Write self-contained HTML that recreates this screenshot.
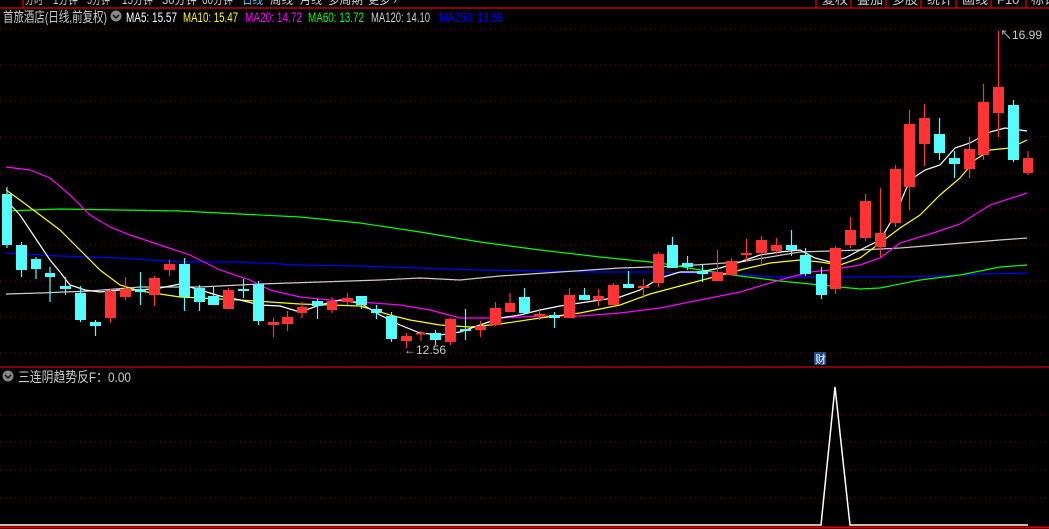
<!DOCTYPE html>
<html><head><meta charset="utf-8"><style>
html,body{margin:0;padding:0;background:#000;width:1049px;height:529px;overflow:hidden;font-family:"Liberation Sans","Noto Sans CJK SC",sans-serif}
svg{position:absolute;left:0;top:0}
</style></head><body>
<svg width="1049" height="529" xmlns="http://www.w3.org/2000/svg" font-family="Liberation Sans, Noto Sans CJK SC, sans-serif">
<rect width="1049" height="529" fill="#000"/>
<g stroke="#c00000" stroke-width="1.5" fill="none">
<line x1="0" y1="8" x2="1049" y2="8"/>
<line x1="23" y1="0" x2="23" y2="8"/>
<line x1="816" y1="0" x2="816" y2="8"/><line x1="851" y1="0" x2="851" y2="8"/><line x1="886" y1="0" x2="886" y2="8"/><line x1="921" y1="0" x2="921" y2="8"/><line x1="956" y1="0" x2="956" y2="8"/><line x1="991" y1="0" x2="991" y2="8"/><line x1="1026" y1="0" x2="1026" y2="8"/>
</g>
<g font-size="13" fill="#ccc">
<text x="25" y="4" textLength="18" lengthAdjust="spacingAndGlyphs">分时</text><text x="53" y="4" textLength="25" lengthAdjust="spacingAndGlyphs">1分钟</text><text x="87" y="4" textLength="23" lengthAdjust="spacingAndGlyphs">5分钟</text><text x="122" y="4" textLength="31" lengthAdjust="spacingAndGlyphs">15分钟</text><text x="162" y="4" textLength="35" lengthAdjust="spacingAndGlyphs">30分钟</text><text x="202" y="4" textLength="31" lengthAdjust="spacingAndGlyphs">60分钟</text>
<text x="242" y="4" fill="#4cf" textLength="21" lengthAdjust="spacingAndGlyphs">日线</text><text x="270" y="4" textLength="23" lengthAdjust="spacingAndGlyphs">周线</text><text x="300" y="4" textLength="22" lengthAdjust="spacingAndGlyphs">月线</text><text x="328" y="4" textLength="35" lengthAdjust="spacingAndGlyphs">多周期</text><text x="368" y="4" textLength="29" lengthAdjust="spacingAndGlyphs">更多 ›</text>
<text x="822" y="4">复权</text><text x="857" y="4">叠加</text><text x="892" y="4">多股</text><text x="927" y="4">统计</text><text x="962" y="4">画线</text><text x="997" y="4">F10</text><text x="1031" y="4">标记</text>
</g>
<text x="3" y="22" font-size="14" fill="#ccc" textLength="104" lengthAdjust="spacingAndGlyphs">首旅酒店(日线,前复权)</text>
<circle cx="116" cy="16" r="5.5" fill="#888"/><path d="M113 15 L116 18 L119 15" stroke="#000" stroke-width="1.3" fill="none"/>
<g font-size="14">
<text x="126" y="22" fill="#fff" textLength="51" lengthAdjust="spacingAndGlyphs">MA5: 15.57</text>
<text x="183" y="22" fill="#ff0" textLength="55" lengthAdjust="spacingAndGlyphs">MA10: 15.47</text>
<text x="245" y="22" fill="#f0f" textLength="57" lengthAdjust="spacingAndGlyphs">MA20: 14.72</text>
<text x="308" y="22" fill="#0f0" textLength="56" lengthAdjust="spacingAndGlyphs">MA60: 13.72</text>
<text x="371" y="22" fill="#ccc" textLength="59" lengthAdjust="spacingAndGlyphs">MA120: 14.10</text>
<text x="439" y="22" fill="#00f" textLength="64" lengthAdjust="spacingAndGlyphs">MA250: 13.59</text>
</g>
<g stroke="#800" stroke-width="1" stroke-dasharray="1,4">
<line x1="0" y1="29" x2="1049" y2="29"/><line x1="0" y1="65" x2="1049" y2="65"/><line x1="0" y1="101" x2="1049" y2="101"/><line x1="0" y1="137" x2="1049" y2="137"/><line x1="0" y1="173" x2="1049" y2="173"/><line x1="0" y1="209" x2="1049" y2="209"/><line x1="0" y1="245" x2="1049" y2="245"/><line x1="0" y1="281" x2="1049" y2="281"/><line x1="0" y1="317" x2="1049" y2="317"/><line x1="0" y1="353" x2="1049" y2="353"/>
<line x1="0" y1="415" x2="1049" y2="415"/><line x1="0" y1="442" x2="1049" y2="442"/><line x1="0" y1="470" x2="1049" y2="470"/><line x1="0" y1="498" x2="1049" y2="498"/>
</g>
<line x1="0" y1="367" x2="1049" y2="367" stroke="#a00" stroke-width="1.5"/>
<line x1="0" y1="527.5" x2="1049" y2="527.5" stroke="#d00" stroke-width="2"/>
<g fill="none" stroke-width="1.2">
<polyline stroke="#00f" points="6,253 60,256 120,258 180,262 240,262 300,265 360,266 420,268 480,270 540,271 600,272 660,272 720,274 780,277 820,277 880,277 940,276 980,274 1027,273"/>
<polyline stroke="#ccc" points="6,294 40,293 90,291 140,287 200,287 260,284 320,282 380,280 420,278 460,280 500,276 560,272 620,268 680,266 740,262 800,252 860,250 900,248 950,244 1000,240 1027,238"/>
<polyline stroke="#0f0" points="6,211 60,209 120,210 180,211 240,214 300,217 360,223 420,232 480,242 540,250 600,257 660,263 700,270 740,276 780,281 820,285 860,289 880,288 920,280 960,275 1000,267 1027,265"/>
<polyline stroke="#f0f" points="6,167 30,170 50,178 70,195 90,215 110,227 130,235 160,245 190,255 220,270 250,280 270,290 300,297 330,300 360,302 400,305 430,310 460,318 500,318 540,316 580,316 620,313 660,308 700,300 740,292 780,280 810,272 830,270 860,265 880,258 900,243 930,234 960,224 990,205 1027,193"/>
<polyline stroke="#ff0" points="6,190 20,200 40,215 60,230 80,250 100,270 120,285 140,291 160,294 180,297 200,298 240,300 270,302 300,304 330,305 360,306 390,315 410,320 440,325 470,327 500,324 540,318 580,313 620,305 650,294 680,286 710,278 740,270 770,263 800,260 820,262 840,265 860,258 880,243 900,228 920,215 940,195 960,178 975,160 990,150 1010,148 1027,140"/>
<polyline stroke="#fff" points="6,200 20,215 40,245 50,260 60,272 70,285 85,290 100,292 120,290 140,290 160,288 180,284 200,290 220,296 240,300 260,305 280,306 300,312 320,305 340,300 360,303 380,315 400,325 420,333 440,335 460,332 480,325 500,318 520,315 540,310 560,306 580,303 600,300 620,297 640,290 660,278 680,272 700,272 720,268 740,262 760,255 780,252 800,250 815,258 830,262 845,258 860,250 880,240 895,215 910,180 925,170 940,165 955,148 970,143 990,132 1005,128 1027,131"/>
</g>
<g id="c"></g>
<text x="404" y="354" font-size="12" fill="#ccc">←12.56</text>
<text x="1000" y="39" font-size="12" fill="#ccc">↖16.99</text>
<rect x="814" y="352" width="12" height="13" fill="#1a4a8a"/><text x="815" y="363" font-size="11" fill="#fff">财</text>
<circle cx="8" cy="376" r="5.5" fill="#888"/><path d="M5 375 L8 378 L11 375" stroke="#000" stroke-width="1.3" fill="none"/>
<text x="18" y="382" font-size="14" fill="#ccc" textLength="113" lengthAdjust="spacingAndGlyphs">三连阴趋势反F：0.00</text>
<polyline fill="none" stroke="#fff" stroke-width="1.5" points="0,525 821,525 835,387 850,525 1028,525"/>
</svg>
<script>
var d=[
[2,12,194,245,187,248,0],[16,27,245,270,242,277,0],[31,41,259,269,257,279,0],[45,55,273,277,267,302,0],[60,71,286,289,277,295,0],[75,86,293,320,286,322,0],[90,101,322,326,320,336,0],[105,116,291,318,289,323,1],[120,131,289,297,277,300,1],[135,146,289,292,272,305,0],[149,160,278,295,276,306,1],[164,175,264,270,260,276,1],[179,190,264,297,258,311,0],[194,205,288,302,285,311,0],[208,219,296,305,287,305,0],[223,234,290,309,288,309,1],[238,249,289,291,279,298,0],[253,264,284,321,281,325,0],[268,279,322,325,318,337,1],[282,293,317,324,311,331,1],[297,307,307,313,302,318,1],[312,323,301,306,299,319,0],[327,337,301,310,297,313,1],[342,353,298,302,293,305,1],[356,367,296,305,296,309,0],[371,382,309,313,305,319,0],
[386,397,316,339,312,342,0],[401,412,336,341,333,348,1],[416,426,333,334,331,341,1],[430,441,333,340,330,345,0],[445,456,319,342,318,345,1],[460,471,329,331,309,340,0],[475,486,326,330,321,337,1],[490,501,308,325,302,326,1],[505,515,303,312,293,312,1],[519,530,297,313,288,313,0],[534,545,314,316,310,320,1],[549,560,315,318,312,328,0],[564,575,295,318,288,318,1],[579,590,295,300,288,300,0],[593,604,296,300,289,306,1],[608,619,285,305,283,305,1],[623,634,284,288,271,288,0],[638,649,286,288,279,298,1],[653,664,254,283,252,287,1],[667,678,245,268,237,268,0],[682,693,263,267,256,270,0],[697,708,271,274,265,282,0],[712,723,272,281,250,281,1],[726,737,261,275,258,275,1],[741,752,253,255,239,262,1],[756,767,240,253,236,266,1],[771,782,245,251,238,254,1],[786,797,245,250,230,256,0],[800,811,255,274,248,276,0],
[816,827,274,295,267,299,0],[830,841,248,289,246,294,1],[845,856,230,245,217,248,1],[860,871,201,238,194,241,1],[875,886,233,247,188,257,1],[890,901,169,223,165,227,1],[904,915,124,187,110,210,1],[919,930,118,144,104,166,1],[934,945,134,153,118,160,0],[949,960,158,164,151,178,0],[964,975,149,169,137,178,1],[978,989,102,155,84,160,1],[993,1004,87,113,31,137,1],[1008,1019,105,160,100,162,0],[1023,1033,158,173,151,175,1]];
var s='';d.forEach(function(c){var col=c[6]?'#ff3333':'#54fcfc';var m=(c[0]+c[1])/2;
s+='<line x1="'+m+'" y1="'+c[4]+'" x2="'+m+'" y2="'+c[5]+'" stroke="'+col+'" stroke-width="1.2"/>';
s+='<rect x="'+c[0]+'" y="'+c[2]+'" width="'+(c[1]-c[0])+'" height="'+Math.max(1.5,c[3]-c[2])+'" fill="'+col+'"/>';});
document.getElementById('c').innerHTML=s;
</script>
</body></html>
